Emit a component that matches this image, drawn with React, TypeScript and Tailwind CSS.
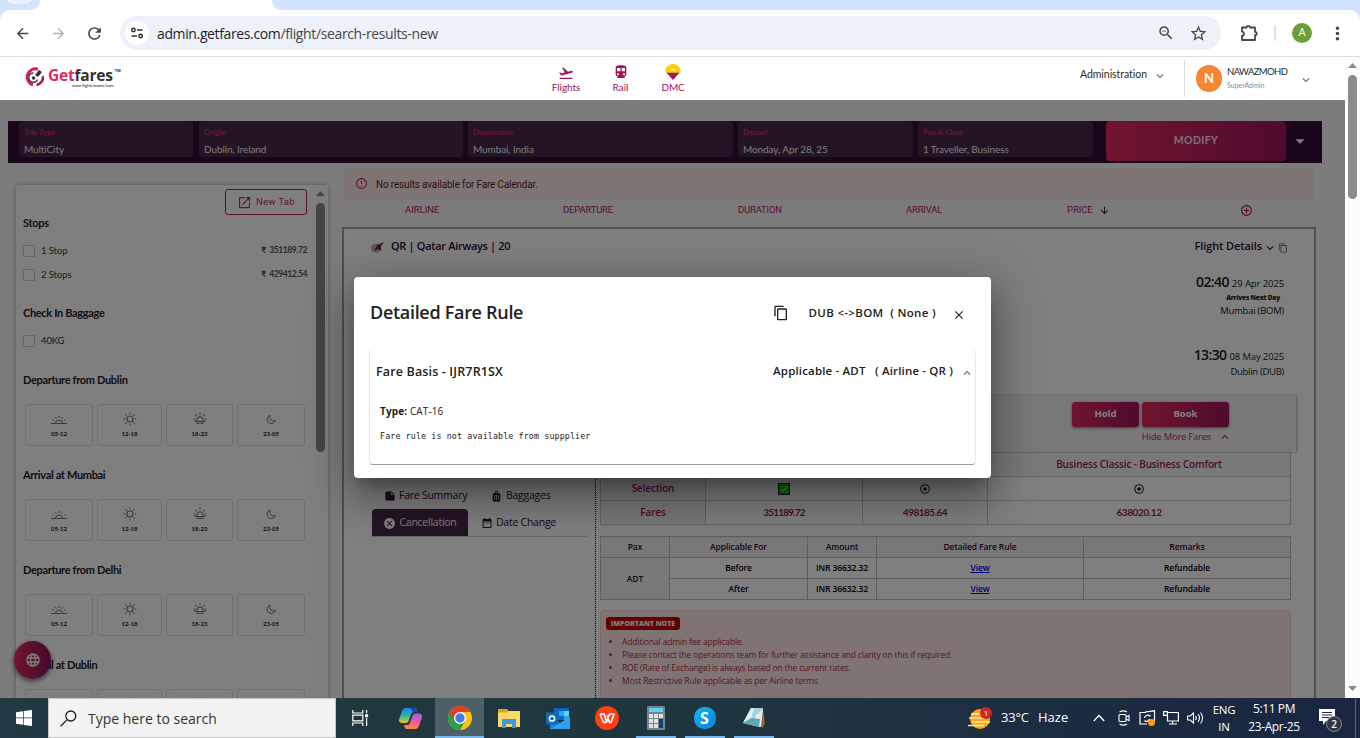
import type { ReactNode } from 'react';
import {
  MdArrowBack, MdArrowForward, MdRefresh, MdZoomOut, MdStarBorder, MdMoreVert, MdFlightTakeoff, MdDirectionsSubway,
  MdKeyboardArrowDown, MdKeyboardArrowUp, MdArrowDropDown, MdOpenInNew, MdErrorOutline, MdArrowDownward,
  MdAddCircleOutline, MdContentCopy, MdClose, MdSummarize, MdLuggage, MdCancel, MdDateRange, MdLanguage, MdCheck,
} from 'react-icons/md';

interface SearchField {
  label: string;
  value: string;
  className: string;
}

const SEARCH_FIELDS: SearchField[] = [
  { label: 'Trip Type', value: 'MultiCity', className: 'w-[174px] mr-1.5' },
  { label: 'Origin', value: 'Dublin, Ireland', className: 'w-[264px] mr-[5px]' },
  { label: 'Destination', value: 'Mumbai, India', className: 'w-[265px] mr-[5px]' },
  { label: 'Depart', value: 'Monday, Apr 28, 25', className: 'w-[175px] mr-[5px]' },
  { label: 'Pax & Class', value: '1 Traveller, Business', className: 'w-[175px] mr-[13px]' },
];

const NOTES = [
  'Additional admin fee applicable.',
  'Please contact the operations team for further assistance and clarity on this if required.',
  'ROE (Rate of Exchange) is always based on the current rates.',
  'Most Restrictive Rule applicable as per Airline terms',
];

const BrowserBar = () => (
  <div className="h-[57px] shrink-0 bg-[#d3e3fd] flex flex-col">
    <div className="h-2.5 flex bg-white">
      <div className="w-[40px] overflow-hidden rounded-br-[9px] bg-[#d3e3fd]">
        <div className="ml-1.5 -mt-3 w-[27px] h-4 bg-[#ecf2fd] rounded-full" />
      </div>
      <div className="ml-[232px] flex-1 rounded-bl-[9px] bg-[#d3e3fd]" />
    </div>
    <div className="flex-1 bg-white rounded-t-[10px] border-b border-[#dcdee0] flex items-center text-[#474747]">
      <div className="w-[44px] flex justify-center"><MdArrowBack size={17} /></div>
      <div className="w-[28px] flex justify-center text-[#b0b0b0]"><MdArrowForward size={17} /></div>
      <div className="w-[44px] flex justify-center"><MdRefresh size={19} /></div>
      <div className="ml-1 w-[1101px] h-[34px] rounded-full bg-[#ecf1fa] flex items-center pl-[5px]">
        <span className="w-6 h-6 rounded-full bg-white flex items-center justify-center">
          <svg className="w-3.5 h-3.5" viewBox="0 0 14 14" fill="none" stroke="#303030" strokeWidth="1.5">
            <circle cx="3.4" cy="4" r="1.7" />
            <path d="M7 4h5.5M1.5 10H7" />
            <circle cx="10.6" cy="10" r="1.7" />
          </svg>
        </span>
        <span className="ml-2 flex-1 font-['Open_Sans',sans-serif] text-[14px] tracking-[-0.37px] text-[#1f1f1f] whitespace-nowrap">
          admin.getfares.com<span className="text-[#474747]">/flight/search-results-new</span>
        </span>
        <MdZoomOut size={18} className="mr-3.5" />
        <MdStarBorder size={19} className="mr-[13px]" />
      </div>
      <svg className="ml-[19px] w-[18px] h-[18px]" viewBox="0 0 18 18" fill="none" stroke="#474747" strokeWidth="1.8" strokeLinejoin="round">
        <path d="M2 3.5h4.6a1.7 1.7 0 0 1 3.4 0H15v4.3a1.7 1.7 0 0 1 0 3.4V16H2v-4.3c2.6 0 2.6-4 0-4z" />
      </svg>
      <span className="ml-[16px] w-0.5 h-4 rounded bg-[#d3e3fd]" />
      <span className="ml-4 w-5 h-5 rounded-full bg-[#689f38] text-white text-[11px] font-['Roboto',sans-serif] flex items-center justify-center">A</span>
      <MdMoreVert size={21} className="ml-[15px]" />
    </div>
  </div>
);

const SiteHeader = () => (
  <header className="h-[43px] shrink-0 bg-white flex font-['Lato',sans-serif] text-[#2b2b2b]">
    <div className="w-[539px] pl-[25px] pt-[10px] flex">
      <svg className="w-[19px] h-[20px]" viewBox="0 0 19 20" fill="none">
        <path d="M13 2.2A8 8 0 1 0 8 18" stroke="#d81b60" strokeWidth="3" />
        <path d="M18 9a8 8 0 0 1-6.5 9" stroke="#a3195b" strokeWidth="2.6" />
        <path d="M8.5 6A4.6 4.6 0 1 0 12.6 12.5" stroke="#444" strokeWidth="1.4" />
        <circle cx="8.6" cy="11" r="1.8" fill="#333" />
        <path d="M10 8l4-5 3 2-4 5z" fill="#333" />
      </svg>
      <div className="ml-1 flex flex-col">
        <div className="flex items-start text-[15.5px] leading-[16px] font-bold tracking-[-0.2px] text-[#333] font-['Open_Sans',sans-serif]">
          <span className="text-[#dc2a62]">Get</span>fares<span className="text-[4px] leading-[8px] ml-0.5">TM</span>
        </div>
        <span className="self-end mr-[7px] text-[4px] leading-[6px] font-bold text-[#555] tracking-[-0.1px]">some flights lowest fares</span>
      </div>
    </div>
    <nav className="flex text-[#a0145a] text-[10px]">
      <div className="w-[54px] flex flex-col items-center pt-2">
        <MdFlightTakeoff size={16} />
        <span className="leading-[13px] tracking-[-0.1px]">Flights</span>
      </div>
      <div className="w-[55px] flex flex-col items-center pt-[7px]">
        <MdDirectionsSubway size={16} />
        <span className="leading-[15px]">Rail</span>
      </div>
      <div className="w-[50px] flex flex-col items-center pt-[7px]">
        <svg className="w-4 h-4" viewBox="0 0 16 16">
          <path d="M.3 7.500a7.700 7.500 0 0 1 15.400 0l-1.400 2H1.700z" fill="#fdd000" />
          <path d="M5 6.500a3 2.600 0 0 1 6 0" fill="#fff3a8" stroke="#f0a800" strokeWidth=".6" />
          <path d="M1.600 8.800h12.800L8 16z" fill="#a0145a" />
        </svg>
        <span className="leading-[15px] tracking-[-0.2px]">DMC</span>
      </div>
    </nav>
    <div className="ml-[382px] w-[104px] h-9 flex items-center text-[10.5px] tracking-[-0.05px]">
      Administration
      <MdKeyboardArrowDown size={14} className="ml-1.5 mt-0.5 text-[#666]" />
    </div>
    <div className="mt-[3px] h-[37px] border-l border-[#ddd] pl-[11px] flex items-center">
      <span className="w-[26px] h-[27px] rounded-full bg-[#f58634] text-white text-[13px] font-bold flex items-center justify-center">N</span>
      <div className="ml-[5px] w-[72px] flex flex-col -mt-px">
        <span className="text-[9.5px] leading-[14px] tracking-[-0.6px]">NAWAZMOHD</span>
        <span className="text-[7px] leading-[12px] text-[#8a8a8a]">SuperAdmin</span>
      </div>
      <MdKeyboardArrowDown size={14} className="mt-0.5 text-[#666]" />
    </div>
  </header>
);

const SearchSummary = () => (
  <div className="mt-[21px] ml-2 w-[1314px] h-[42px] pl-[11px] bg-[#340c34] flex items-start font-['Lato',sans-serif]">
    {SEARCH_FIELDS.map(f => (
      <div key={f.label} className={`h-9 shrink-0 rounded bg-[#4a284a] pl-[5px] pt-1 flex flex-col ${f.className}`}>
        <span className="text-[8px] leading-[14px] text-[#d92b58] font-bold tracking-[-0.1px]">{f.label}</span>
        <span className="mt-[3px] text-[10px] leading-[14px] text-[#f5f0f5] tracking-[-0.1px]">{f.value}</span>
      </div>
    ))}
    <button className="w-[180px] h-10 shrink-0 rounded bg-gradient-to-r from-[#e22a5f] to-[#a0145a] text-[#f7e0ea] text-[10.5px] font-bold tracking-[0.4px]">MODIFY</button>
    <MdArrowDropDown size={22} className="mt-[9px] ml-[3px] text-white" />
  </div>
);

const SunriseIcon = () => (
  <svg className="w-4 h-3.5" viewBox="0 0 16 14" fill="none" stroke="#777" strokeWidth="1">
    <path d="M0 11.500h16M4.500 11a3.500 2.800 0 0 1 7 0M8 4v2M4.500 5l.8 1.600M11.500 5l-.8 1.600M1.500 7.500l1.600 1M14.500 7.500l-1.600 1" />
  </svg>
);

const SunIcon = () => (
  <svg className="w-3.5 h-3.5" viewBox="0 0 14 14" fill="none" stroke="#777" strokeWidth="1.1">
    <circle cx="7" cy="7" r="3" />
    <path d="M7 .5v1.800M7 11.700v1.800M.5 7h1.800M11.700 7h1.800M2.400 2.400l1.200 1.200M10.400 10.400l1.200 1.200M2.400 11.600l1.200-1.200M10.400 3.600l1.200-1.200" />
  </svg>
);

const SunsetIcon = () => (
  <svg className="w-3.5 h-3.5" viewBox="0 0 14 14" fill="none" stroke="#777" strokeWidth="1.1">
    <path d="M4 9.500a3.200 3.400 0 1 1 6 0M.8 8.500l2.700 1h7l2.700-1M3 11.300h8M7 .8v1.800M2.400 3l1.200 1.200M11.600 3l-1.200 1.200M.6 7h1.600M11.800 7h1.600" />
  </svg>
);

const MoonIcon = () => (
  <svg className="w-3 h-3.5" viewBox="0 0 12 14" fill="none" stroke="#777" strokeWidth="1">
    <path d="M5 3.200a4.300 4.300 0 1 0 5.500 5.500 4.200 4.200 0 0 1-5.500-5.500z" />
  </svg>
);

const TimeSlot = ({ label, className, children }: { label?: string; className: string; children: ReactNode }) => (
  <div className={`h-[42px] shrink-0 rounded-[3px] border border-[#e0e0e0] flex flex-col items-center pt-[7px] ${className}`}>
    {children}
    {label && <span className="mt-[2px] text-[6px] leading-3 font-bold text-[#222]">{label}</span>}
  </div>
);

const TimeFilter = ({ title, hours = [] }: { title: string; hours?: string[] }) => (
  <div>
    <h4 className="h-4 text-[11px] leading-[15px] font-bold text-[#222] tracking-[-0.33px]">{title}</h4>
    <div className="mt-4 pl-0.5 flex">
      <TimeSlot label={hours[0]} className="w-[68px] mr-1"><SunriseIcon /></TimeSlot>
      <TimeSlot label={hours[1]} className="w-[65px] mr-1"><SunIcon /></TimeSlot>
      <TimeSlot label={hours[2]} className="w-[67px] mr-1"><SunsetIcon /></TimeSlot>
      <TimeSlot label={hours[3]} className="w-[68px]"><MoonIcon /></TimeSlot>
    </div>
  </div>
);

const HOURS = ['05-12', '12-18', '18-23', '23-05'];

const FilterOption = ({ label, price }: { label: string; price?: string }) => (
  <div className="h-6 flex items-center text-[9.5px] text-[#333]">
    <span className="w-3 h-3 rounded-[1px] border border-[#cfcfcf]" />
    <span className="ml-1.5 flex-1 tracking-[-0.1px]">{label}</span>
    {price && <span className="mb-0.5 text-[8.5px] text-[#555] font-bold tracking-[-0.4px] whitespace-pre">₹  {price}</span>}
  </div>
);

const Filters = () => (
  <aside className="mt-[22px] w-[312px] h-[520px] shrink-0 bg-white rounded-t flex shadow-[0_0_4px_rgba(0,0,0,0.35)] font-['Lato',sans-serif]">
    <div className="w-[297px] pl-[7px] pr-1.5 pt-1">
      <div className="flex justify-end">
        <button className="w-[82px] h-[26px] rounded-[3px] border border-[#c71a6e] text-[#c02a70] text-[9.5px] tracking-[0.3px] flex items-center justify-center gap-1 font-['Roboto',sans-serif]">
          <MdOpenInNew size={15} />New Tab
        </button>
      </div>
      <h4 className="h-4 text-[11px] leading-[15px] font-bold text-[#222] tracking-[-0.3px]">Stops</h4>
      <div className="mt-2">
        <FilterOption label="1 Stop" price="351189.72" />
        <FilterOption label="2 Stops" price="429412.54" />
      </div>
      <h4 className="mt-[18px] h-4 text-[11px] leading-[15px] font-bold text-[#222] tracking-[-0.33px]">Check In Baggage</h4>
      <div className="mt-2">
        <FilterOption label="40KG" />
      </div>
      <div className="mt-[19px] flex flex-col gap-[21px]">
        <TimeFilter title="Departure from Dublin" hours={HOURS} />
        <TimeFilter title="Arrival at Mumbai" hours={HOURS} />
        <TimeFilter title="Departure from Delhi" hours={HOURS} />
        <TimeFilter title="Arrival at Dublin" />
      </div>
    </div>
    <div className="w-[15px] bg-[#fcfcfc] flex flex-col items-center pt-1.5">
      <svg className="w-[9px] h-[5px]" viewBox="0 0 9 5"><path d="M0 5l4.5-5L9 5z" fill="#8b8b8b" /></svg>
      <div className="mt-[7px] w-[9px] h-[249px] rounded-full bg-[#8b8b8b]" />
    </div>
  </aside>
);

const Radio = () => (
  <svg className="w-2.5 h-2.5" viewBox="0 0 10 10" fill="none">
    <circle cx="5" cy="5" r="4.3" stroke="#222" strokeWidth="1.1" />
    <circle cx="5" cy="5" r="1.8" fill="#111" />
  </svg>
);

const FareTable = () => (
  <div className="w-[691px] border-l border-t border-[#c4c4c4] grid grid-cols-[105px_157px_125px_303px] text-[#a0145a] text-[10px] font-semibold tracking-[-0.15px] font-['Open_Sans',sans-serif] [&>div]:h-6 [&>div]:border-r [&>div]:border-b [&>div]:border-[#c4c4c4] [&>div]:flex [&>div]:items-center [&>div]:justify-center">
    <div className="bg-[#f2f2f2]" />
    <div className="bg-[#f2f2f2]" />
    <div className="bg-[#f2f2f2]" />
    <div className="bg-[#f2f2f2]">Business Classic - Business Comfort</div>
    <div className="bg-[#f2f2f2]">Selection</div>
    <div>
      <span className="w-3 h-3 bg-[#14cc14] border border-[#222] text-white flex items-center justify-center"><MdCheck size={10} /></span>
    </div>
    <div><Radio /></div>
    <div><Radio /></div>
    <div className="bg-[#f2f2f2]">Fares</div>
    <div className="font-['Lato',sans-serif] font-bold tracking-[-0.8px]">351189.72</div>
    <div className="font-['Lato',sans-serif] font-bold tracking-[-0.5px]">498185.64</div>
    <div className="font-['Lato',sans-serif] font-bold tracking-[-0.4px]">638020.12</div>
  </div>
);

const PenaltyTable = () => (
  <table className="mt-[11px] w-[691px] table-fixed border-collapse text-center text-[8.5px] leading-3 font-semibold tracking-[-0.1px] text-black font-['Open_Sans',sans-serif] [&_td]:border [&_td]:border-[#bcbcbc] [&_th]:border [&_th]:border-[#bcbcbc] [&_th]:font-semibold [&_td]:p-0 [&_th]:p-0">
    <thead>
      <tr className="h-[21px] bg-[#f0f0f0] text-[#340c34]">
        <th className="w-[69px]">Pax</th>
        <th className="w-[138px]">Applicable For</th>
        <th className="w-[69px]">Amount</th>
        <th className="w-[207px]">Detailed Fare Rule</th>
        <th>Remarks</th>
      </tr>
    </thead>
    <tbody>
      {['Before', 'After'].map((when, i) => (
        <tr key={when} className="h-[21px]">
          {i === 0 && <td rowSpan={2} className="bg-[#f0f0f0] text-[#340c34]">ADT</td>}
          <td>{when}</td>
          <td className="whitespace-nowrap">INR 36632.32</td>
          <td><a className="text-[#0000ee] underline">View</a></td>
          <td>Refundable</td>
        </tr>
      ))}
    </tbody>
  </table>
);

const ImportantNote = () => (
  <div className="mt-[10px] w-[691px] h-[120px] rounded-t border border-[#f6cfcf] bg-[#ffe9e7] pl-[5px] pt-1.5 font-['Open_Sans',sans-serif]">
    <span className="block w-[74px] h-[13px] rounded-[3px] bg-[#c40000] text-white text-[7px] leading-[13px] font-extrabold text-center whitespace-nowrap">IMPORTANT NOTE</span>
    <ul className="mt-[5px] text-[8.5px] leading-[13px] text-[#b03040] tracking-[-0.17px]">
      {NOTES.map(note => (
        <li key={note} className="flex items-center">
          <span className="ml-[3px] mr-2.5 w-[3px] h-[3px] rounded-full bg-[#c03a3a]" />{note}
        </li>
      ))}
    </ul>
  </div>
);

const GradientButton = ({ label, className }: { label: string; className: string }) => (
  <button className={`h-[25px] rounded-[3px] bg-gradient-to-r from-[#e22a5f] to-[#a0145a] text-white text-[9.5px] font-bold shadow-[0_1px_3px_rgba(0,0,0,0.5)] ${className}`}>{label}</button>
);

const ResultCard = () => (
  <div className="mt-1.5 -ml-0.5 w-[974px] h-[480px] shrink-0 border-2 border-b-0 border-[#a0a0a0] bg-white font-['Open_Sans',sans-serif] text-[#222]">
    <div className="h-[34px] pl-[27px] pr-[26px] flex items-center text-[11px] font-semibold text-[#340c34]">
      <svg className="w-3.5 h-3 mt-0.5" viewBox="0 0 14 12">
        <ellipse cx="5" cy="7" rx="5" ry="4.5" fill="#b5b5b5" />
        <path d="M3 10l3-6 7-3-3 4v5l-3-2z" fill="#6d2a50" />
      </svg>
      <span className="ml-1.5 flex-1 tracking-[-0.33px]">QR | Qatar Airways | 20</span>
      <span className="tracking-[-0.1px]">Flight Details</span>
      <MdKeyboardArrowDown size={14} className="mt-1 ml-px" />
      <MdContentCopy size={10} className="mt-1 ml-px text-[#666]" />
    </div>
    <div className="h-[132px] pr-[30px] flex flex-col items-end text-[9.5px]">
      <div className="mt-2.5 h-[18px] leading-[18px] flex items-baseline gap-[3px]"><span className="text-[14px] font-semibold tracking-[-0.6px]">02:40</span><span className="tracking-[-0.1px]">29 Apr 2025</span></div>
      <div className="mr-1 h-3 leading-[13px] text-[6.5px] font-extrabold tracking-[-0.2px]">Arrives Next Day</div>
      <div className="leading-[15px] tracking-[-0.25px]">Mumbai (BOM)</div>
      <div className="mt-7 h-[18px] leading-[18px] flex items-baseline gap-[3px]"><span className="text-[14px] font-semibold tracking-[-0.6px]">13:30</span><span className="tracking-[-0.15px]">08 May 2025</span></div>
      <div className="leading-[15px] tracking-[-0.3px]">Dublin (DUB)</div>
    </div>
    <div className="ml-3 mr-[18px] h-[57px] bg-[#f2f2f2] shadow-[1px_0_2px_rgba(0,0,0,0.3)] pr-[67px] pt-[7px] flex flex-col items-end">
      <div className="flex gap-[3px]">
        <GradientButton label="Hold" className="w-[67px]" />
        <GradientButton label="Book" className="w-[87px]" />
      </div>
      <div className="mt-[3px] -mr-[3px] flex items-center text-[9.5px] leading-[14px] tracking-[-0.25px] text-[#c71a5e]">
        Hide More Fares<MdKeyboardArrowUp size={14} className="ml-[7px]" />
      </div>
    </div>
    <div className="flex">
      <div className="w-[252px] shrink-0 pl-7 pt-[32px] h-[250px] border-r border-dotted border-black text-[10.5px] text-[#340c34] tracking-[-0.25px]">
        <div className="h-[24px] mb-px pl-3 flex items-center">
          <MdSummarize size={12} /><span className="ml-[3px] w-[91px]">Fare Summary</span>
          <MdLuggage size={13} /><span className="ml-[3px]">Baggages</span>
        </div>
        <div className="w-[215px] h-7 border-b border-[#c8c8c8] flex items-center">
          <div className="w-24 h-[27px] shrink-0 rounded-t bg-[#4a284a] text-white flex items-center justify-center gap-[3px] pt-px">
            <MdCancel size={13} />Cancellation
          </div>
          <MdDateRange size={12} className="ml-[13px]" /><span className="ml-[3px] pt-px">Date Change</span>
        </div>
      </div>
      <div className="pl-1">
        <FareTable />
        <PenaltyTable />
        <ImportantNote />
      </div>
    </div>
  </div>
);

const Results = () => (
  <main className="ml-4 pt-[5px] flex flex-col">
    <div className="w-[970px] h-8 rounded-t bg-[#ffe9e9] flex items-center pl-[11px] font-['Roboto',sans-serif] text-[10px] text-[#5f2120]">
      <MdErrorOutline size={13} className="mr-2 mb-0.5 text-[#d32f2f]" />
      <span className="tracking-[-0.17px]">No results available for Fare Calendar.</span>
    </div>
    <div className="w-[970px] h-[21px] pb-px bg-[#f6f6f6] flex items-center font-['Roboto',sans-serif] text-[9.5px] text-[#b0185e]">
      <span className="ml-[61px] w-[158px]">AIRLINE</span>
      <span className="w-[175px] tracking-[-0.2px]">DEPARTURE</span>
      <span className="w-[168px] tracking-[-0.2px]">DURATION</span>
      <span className="w-[161px] tracking-[-0.2px]">ARRIVAL</span>
      <span className="w-[173px] flex items-center tracking-[-0.1px]">PRICE<MdArrowDownward size={11} className="ml-1.5 text-[#340c34]" /></span>
      <MdAddCircleOutline size={13} />
    </div>
    <ResultCard />
  </main>
);

const FareRuleDialog = () => (
  <div className="absolute left-[354px] top-[177px] w-[637px] h-[201px] rounded bg-white px-4 flex flex-col font-['Open_Sans',sans-serif] text-[#212121] shadow-[0_11px_15px_-7px_rgba(0,0,0,0.3),0_24px_38px_3px_rgba(0,0,0,0.2),0_9px_46px_8px_rgba(0,0,0,0.2)]">
    <div className="h-[72px] flex items-center">
      <h2 className="flex-1 pb-0.5 text-[18px] font-semibold tracking-[-0.3px]">Detailed Fare Rule</h2>
      <MdContentCopy size={16} className="mr-5" />
      <span className="text-[11.5px] font-semibold tracking-[0.33px] whitespace-pre">DUB {'<->'}BOM  ( None )</span>
      <MdClose size={14} className="ml-4 mr-[9px] mt-1" />
    </div>
    <div className="-mx-px h-[116px] rounded border-x border-[#e8e8e8] border-b border-b-[#9e9e9e] px-1.5">
      <div className="h-[44px] flex items-center text-[12.5px] font-semibold">
        <span className="flex-1 pt-0.5 tracking-[0.15px]">Fare Basis - IJR7R1SX</span>
        <span className="text-[11.5px] tracking-[0.16px] whitespace-pre">Applicable - ADT   ( Airline - QR )</span>
        <MdKeyboardArrowUp size={14} className="-mr-[5px] ml-[7px] mt-1 text-[#666]" />
      </div>
      <p className="mt-2.5 pl-1 text-[10px] leading-4 tracking-[0.12px]"><b>Type:</b> CAT-16</p>
      <pre className="mt-[9px] pl-1 text-[8.35px] leading-4 tracking-[0.11px] font-['DejaVu_Sans_Mono',monospace]">Fare rule is not available from suppplier</pre>
    </div>
  </div>
);

const Workspace = () => (
  <div className="relative h-[598px] overflow-hidden bg-[#f8f8f8]">
    <SearchSummary />
    <div className="flex pl-4">
      <Filters />
      <Results />
    </div>
    <div className="absolute left-3.5 top-[541px] w-[37px] h-[38px] rounded-full bg-gradient-to-r from-[#e22a5f] to-[#8a1458] flex items-center justify-center text-white shadow-[0_2px_5px_rgba(0,0,0,0.6)]">
      <MdLanguage size={16} />
    </div>
    <div className="absolute inset-0 bg-black/50" />
    <FareRuleDialog />
  </div>
);

const PageScrollbar = () => (
  <div className="w-[15px] bg-[#fcfcfc] flex flex-col items-center justify-between pt-1.5 pb-[7px]">
    <div className="flex flex-col items-center">
      <svg className="w-[9px] h-[5px]" viewBox="0 0 9 5"><path d="M0 5l4.5-5L9 5z" fill="#8b8b8b" /></svg>
      <div className="mt-[7px] w-[9px] h-[124px] rounded-full bg-[#8b8b8b]" />
    </div>
    <svg className="w-[9px] h-[5px]" viewBox="0 0 9 5"><path d="M0 0l4.5 5L9 0z" fill="#8b8b8b" /></svg>
  </div>
);

const TaskIcon = ({ state, children }: { state?: 'active' | 'open'; children: ReactNode }) => (
  <div className={`w-[49px] h-10 flex flex-col items-center ${state === 'active' ? 'bg-[#4d5f67]' : ''}`}>
    <div className="h-[38px] flex items-center pt-0.5">{children}</div>
    {state && <span className={`h-0.5 bg-[#76b9ed] ${state === 'active' ? 'w-full' : 'w-10'}`} />}
  </div>
);

const Taskbar = () => (
  <footer className="h-10 shrink-0 bg-gradient-to-r from-[#203942] via-[#20363f] to-[#192541] flex items-center text-white font-['Open_Sans',sans-serif]">
    <div className="w-12 flex justify-center">
      <svg className="w-4 h-4" viewBox="0 0 16 16" fill="#fff">
        <path d="M0 2.200l7-1v6.400H0zM7.700 1.100L16 0v7.600H7.700zM0 8.300h7v6.500l-7-1zM7.700 8.300H16V16l-8.300-1.100z" />
      </svg>
    </div>
    <div className="w-[288px] h-10 bg-[#f2f2f2] border border-[#c4c4c4] flex items-center pl-[11px] text-[#333] text-[14px]">
      <svg className="w-[17px] h-[17px]" viewBox="0 0 17 17" fill="none" stroke="#222" strokeWidth="1.3">
        <circle cx="10.8" cy="6" r="5" />
        <path d="M7.200 9.600L.6 16.200" />
      </svg>
      <span className="ml-[11px]">Type here to search</span>
    </div>
    <TaskIcon>
      <svg className="w-[17px] h-4" viewBox="0 0 17 16" fill="none" stroke="#fff" strokeWidth="1.2">
        <path d="M.8 0v3h10V0M.8 16v-3h10v3M.8 5.200h10v5.600H.8zM14.600 0v3M14.600 8v8" />
        <path d="M13.100 4.200h3v3h-3z" fill="#fff" stroke="none" />
      </svg>
    </TaskIcon>
    <div className="w-px" />
    <TaskIcon>
      <svg className="w-[23px] h-[21px]" viewBox="0 0 23 21">
        <defs>
          <linearGradient id="cpA" x1="0" y1="0" x2="0" y2="1"><stop stopColor="#1b7ff0" /><stop offset=".5" stopColor="#2bb5a0" /><stop offset="1" stopColor="#e8c71c" /></linearGradient>
          <linearGradient id="cpB" x1="0" y1="0" x2="0" y2="1"><stop stopColor="#9a5cf0" /><stop offset=".5" stopColor="#f0569a" /><stop offset="1" stopColor="#fb8b3c" /></linearGradient>
        </defs>
        <path d="M7 0h8c2 0 2.500 1.500 3 4h-3c-2 0-2.600 1-3 2.500L9.500 13c-.5 1.500-1.500 2-3 2H3c-3 0-3.400-2-2.600-4.500L3 3C3.800 1 5 0 7 0z" fill="url(#cpA)" />
        <path d="M16 21H8c-2 0-2.500-1.500-3-4h3c2 0 2.600-1 3-2.500L13.500 8c.5-1.500 1.500-2.500 3-2.500H20c3 0 3.400 2.500 2.600 5L20 18c-.8 2-2 3-4 3z" fill="url(#cpB)" />
        <path d="M12 0h3c2 0 2.500 1.500 3 4h-3c-1.800 0-2.600-1.500-3-4z" fill="#1746b8" />
      </svg>
    </TaskIcon>
    <TaskIcon state="active">
      <svg className="w-6 h-6" viewBox="0 0 24 24">
        <circle cx="12" cy="12" r="12" fill="#fbc116" />
        <path d="M12 12L1.600 6A12 12 0 0 0 12 24l5.200-9z" fill="#2c9f48" />
        <path d="M1.600 6A12 12 0 0 1 22.400 6H12L6.800 15z" fill="#e33b2e" />
        <circle cx="12" cy="12" r="6" fill="#fff" />
        <circle cx="12" cy="12" r="4.700" fill="#3c7de8" />
      </svg>
    </TaskIcon>
    <TaskIcon>
      <svg className="w-[22px] h-[19px]" viewBox="0 0 22 19">
        <path d="M0 0h9l1.500 2H22v15H0z" fill="#e0a21a" />
        <path d="M0 3.500h9L10.500 2H22v16H0z" fill="#fdd668" />
        <path d="M4 19v-9h14v9h-4v-4H8v4z" fill="#3f97dd" />
      </svg>
    </TaskIcon>
    <TaskIcon>
      <svg className="w-6 h-[21px]" viewBox="0 0 24 21">
        <path d="M8 0h15v12H8z" fill="#1066b8" />
        <path d="M13 3h5v5h-5z" fill="#28a8ea" /><path d="M18 3h5v5h-5z" fill="#50d9ff" /><path d="M18 8h5v4h-5z" fill="#28a8ea" />
        <path d="M4 9l10 6 10-6v12H4z" fill="#1a85d6" />
        <path d="M4 21l20-12v12z" fill="#2ba3ee" />
        <rect y="4.500" width="12" height="12" rx="1" fill="#0f6cbd" />
        <circle cx="6" cy="10.500" r="2.600" fill="none" stroke="#fff" strokeWidth="1.500" />
      </svg>
    </TaskIcon>
    <TaskIcon>
      <svg className="w-6 h-6" viewBox="0 0 24 24">
        <circle cx="12" cy="12" r="12" fill="#ff3e14" />
        <path d="M5 8h4.200l2.300 8 3-8H19l-3 8.500h-1.500L12 9.500M5 8l3.500 8.500h2.800" fill="none" stroke="#fff" strokeWidth="1.600" strokeLinejoin="round" />
      </svg>
    </TaskIcon>
    <TaskIcon state="open">
      <svg className="w-[18px] h-6" viewBox="0 0 18 24">
        <rect width="18" height="24" rx="1" fill="#7b8288" />
        <path d="M2 2h14v4H2z" fill="#5ad4f5" />
        <path d="M2 8h4v4H2zM7 8h4v4H7zM12 8h4v4h-4zM2 13h4v4H2zM7 13h4v4H7zM2 18h4v4H2zM7 18h4v4H7z" fill="#dfe3e6" />
        <path d="M12 13h4v9h-4z" fill="#12427a" />
      </svg>
    </TaskIcon>
    <TaskIcon state="open">
      <span className="w-[22px] h-[22px] rounded-[10px] bg-gradient-to-br from-[#19b4f1] to-[#0a82dc] flex items-center justify-center text-[16px] leading-none font-bold">S</span>
    </TaskIcon>
    <TaskIcon state="open">
      <svg className="w-6 h-[22px]" viewBox="0 0 24 22">
        <path d="M9 1l12 1 2 15-3 4z" fill="#8a6a3c" />
        <path d="M9 1h12l-3 19-17-4z" fill="#a5d3da" />
        <path d="M9 1l3 0-3 12-8 3z" fill="#d8f0f3" />
        <path d="M14 8l7-6-2 18-9-2z" fill="#e3e8ea" />
        <path d="M9 11l9 1-1 8-16-4z" fill="#5fa6b4" />
      </svg>
    </TaskIcon>
    <div className="flex-1" />
    <div className="w-[33px] h-[22px] relative">
      <svg className="w-6 h-5 mt-0.5" viewBox="0 0 24 20">
        <circle cx="12" cy="10" r="10" fill="#fba61a" />
        <path d="M3 5h13M1 9h15M4 13h18M0 16.500h16" stroke="#fde6a8" strokeWidth="1.400" />
      </svg>
      <span className="absolute right-[9px] top-0 w-3 h-3 rounded-full bg-[#c8281e] text-[8px] leading-3 text-center">1</span>
    </div>
    <span className="w-[37px] text-[13px] tracking-[-0.2px]">33°C</span>
    <span className="w-[55px] text-[13px]">Haze</span>
    <svg className="w-3 h-2 mr-[13px]" viewBox="0 0 12 8" fill="none" stroke="#fff" strokeWidth="1.300"><path d="M.8 7L6 1.500 11.200 7" /></svg>
    <svg className="w-3 h-4 mr-[9px]" viewBox="0 0 12 16" fill="none" stroke="#fff" strokeWidth="1.100">
      <rect x="1" y="4.500" width="7" height="7" rx="1" /><path d="M8 7l3-1.500v5L8 9M1.500 2c2.500-1.500 5-1.500 7.500 0M1.500 14c2.500 1.500 5 1.500 7.500 0" />
    </svg>
    <svg className="w-[17px] h-4 mr-[7px]" viewBox="0 0 17 16" fill="none" stroke="#fff" strokeWidth="1.200">
      <path d="M6 2L15.500.800V11M7 2.500H1V14h7M5.500 8a3 3 0 0 1 5-2l1-1M10.500 9a3 3 0 0 1-5 1.500" /><circle cx="12.500" cy="12.500" r="3.500" fill="#ff9b0a" stroke="none" />
    </svg>
    <svg className="w-4 h-3.5 mr-2" viewBox="0 0 16 14" fill="none" stroke="#fff" strokeWidth="1.200">
      <path d="M5 1.500h10.400v8.500H4.500V5M9.500 10v3M6 13h8M.6.600h3.800v3.800H.6z" />
    </svg>
    <svg className="w-[17px] h-3.5" viewBox="0 0 17 14" fill="none" stroke="#fff" strokeWidth="1.100">
      <path d="M.6 5v4h2.600L6.500 12V2L3.200 5zM8.500 5a3 3 0 0 1 0 4M11 3.200a5.500 5.500 0 0 1 0 7.600M13.500 1.500a8.500 8.500 0 0 1 0 11" />
    </svg>
    <div className="ml-[4px] w-8 text-center text-[11.5px] leading-[17px] tracking-[-0.3px]">ENG<br />IN</div>
    <div className="ml-[5px] w-[58px] text-center text-[12px] leading-[18px] tracking-[-0.4px] whitespace-nowrap">5:11 PM<br />23-Apr-25</div>
    <div className="ml-[16px] mr-[12px] w-6 h-6 relative">
      <svg className="w-4 h-4 mt-[3px]" viewBox="0 0 16 16" fill="#fff">
        <path d="M0 0h16v12H7l-3 4v-4H0z" />
        <path d="M3 3.500h10M3 6h10M3 8.500h7" stroke="#1a2a40" strokeWidth="1" />
      </svg>
      <span className="absolute left-[7px] top-2.5 w-4 h-4 rounded-full bg-[#30363e] border border-[#888] text-[10px] leading-[14px] font-semibold text-center">2</span>
    </div>
    <span className="w-px h-10 mr-1 bg-[#59657a]" />
  </footer>
);

export default function App() {
  return (
    <div className="w-[1360px] h-[738px] overflow-hidden flex flex-col bg-white">
      <BrowserBar />
      <div className="h-[641px] flex">
        <div className="w-[1345px] flex flex-col">
          <SiteHeader />
          <Workspace />
        </div>
        <PageScrollbar />
      </div>
      <Taskbar />
    </div>
  );
}
